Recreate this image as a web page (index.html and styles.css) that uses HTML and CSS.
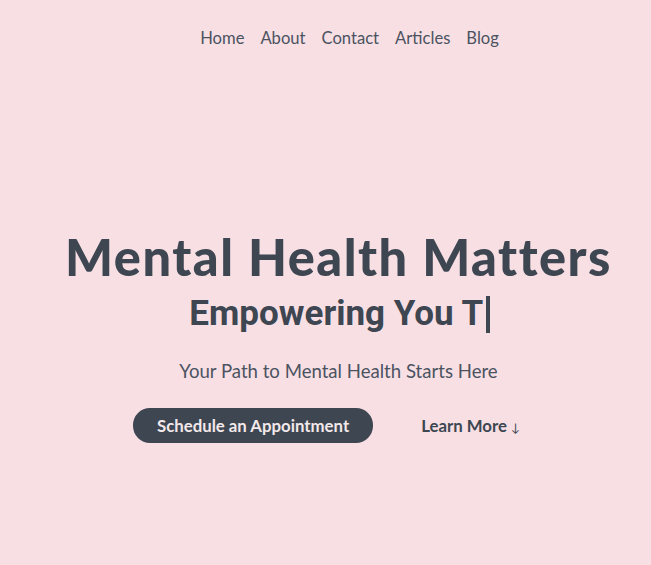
FILE: index.html
```html
<!DOCTYPE html>
<html lang="en">
<head>
<meta charset="utf-8">
<title>Mental Health Matters</title>
<link rel="stylesheet" href="styles.css">
</head>
<body>
<header class="site-header">
  <nav class="nav">
    <a href="#">Home</a>
    <a href="#">About</a>
    <a href="#">Contact</a>
    <a href="#">Articles</a>
    <a href="#">Blog</a>
  </nav>
</header>
<main class="hero">
  <h1 class="hero-title">Mental Health Matters</h1>
  <h2 class="hero-typed">Empowering You T<span class="caret"></span></h2>
  <p class="hero-sub">Your Path to Mental Health Starts Here</p>
  <div class="hero-actions">
    <a class="btn-primary" href="#">Schedule an Appointment</a>
    <a class="btn-link" href="#">Learn More <span class="arrow">↓</span></a>
  </div>
</main>
</body>
</html>
```
FILE: styles.css
```css
* { box-sizing: border-box; }
html, body { margin: 0; padding: 0; }
body {
  background: #f8dfe4;
  color: #3d4651;
  font-family: "Lato", "Open Sans", sans-serif;
  height: 565px;
  overflow: hidden;
}
a { color: inherit; text-decoration: none; }
.site-header {
  display: flex;
  justify-content: center;
  padding: 28px 0 0 48px;
}
.nav {
  display: flex;
  gap: 16px;
  font-size: 16.6px;
  color: #4b5361;
}
.hero {
  display: flex;
  flex-direction: column;
  align-items: center;
  padding: 179px 0 0 26px;
}
.hero-title {
  margin: 0;
  font-family: "Lato", sans-serif;
  font-weight: 900;
  font-size: 50.5px;
  letter-spacing: 1.5px;
  line-height: 60px;
}
.hero-typed {
  margin: 5px 0 0;
  font-family: "Roboto", sans-serif;
  font-weight: 700;
  font-size: 35px;
  line-height: 44px;
  display: flex;
  align-items: center;
  padding-left: 2px;
}
.caret {
  display: inline-block;
  width: 3.5px;
  height: 37px;
  background: #3d4651;
  margin-left: 3px;
}
.hero-sub {
  margin: 24px 0 0;
  font-size: 18.6px;
  color: #4b5361;
}
.hero-actions {
  display: flex;
  align-items: center;
  gap: 48px;
  margin-top: 26px;
  margin-left: -24px;
}
.btn-primary {
  background: #3d4651;
  color: #f3e8ea;
  font-weight: 700;
  font-size: 16.8px;
  padding: 7px 24px;
  border-radius: 17px;
}
.btn-link {
  font-weight: 700;
  font-size: 16.8px;
}
.arrow {
  font-size: 12px;
  font-weight: 400;
}
```
